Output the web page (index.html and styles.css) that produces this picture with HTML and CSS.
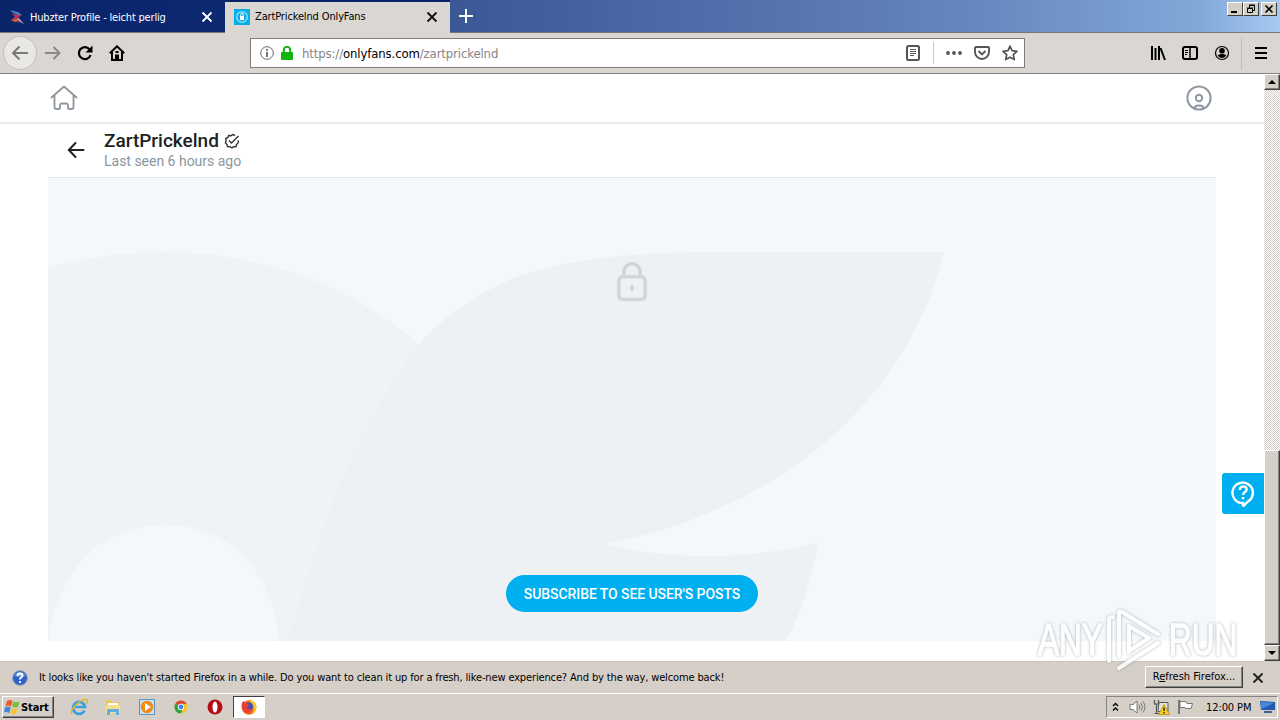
FILE: index.html
```html
<!DOCTYPE html>
<html lang="en">
<head>
<meta charset="utf-8">
<title>ZartPrickelnd OnlyFans</title>
<link rel="stylesheet" href="styles.css">
</head>
<body>
<header class="tabstrip">
  <div class="tab tab-idle">
    <svg class="favicon" width="18" height="18" viewBox="0 0 18 18"><path d="M2 2l8 2 4 3-3 1-6-3z" fill="#4b78b8"/><path d="M4 6l9 1.500-6 5-4 0 4-4z" fill="#c22c58"/><path d="M8 11l3-1 5 6-6-3z" fill="#a9a0b8"/><path d="M3 12l6-1 3 2-5 1z" fill="#d2603a"/></svg>
    <span class="tab-title t1">Hubzter Profile - leicht perlig</span>
    <svg class="x" width="12" height="12" viewBox="0 0 12 12"><path d="M1.500 1.500l9 9m0-9l-9 9" stroke="#fff" stroke-width="1.800"/></svg>
  </div>
  <div class="tab tab-active">
    <svg class="favicon" width="16" height="16" viewBox="0 0 16 16"><path fill="#08aee8" d="M0 0h16v16H0z"/><circle cx="8" cy="8" r="5.300" fill="none" stroke="#8be0fb" stroke-width="1.400"/><path d="M6 7h4v4H6z" fill="#fff"/><path d="M6.700 7V5.700a1.300 1.300 0 012.600 0V7" stroke="#fff" fill="none"/></svg>
    <span class="tab-title t2">ZartPrickelnd OnlyFans</span>
    <svg class="x" width="12" height="12" viewBox="0 0 12 12"><path d="M1.500 1.500l9 9m0-9l-9 9" stroke="#111" stroke-width="1.800"/></svg>
  </div>
  <svg class="plus" width="14" height="14" viewBox="0 0 14 14"><path d="M7 0v14M0 7h14" stroke="#fff" stroke-width="2"/></svg>
  <div class="winbtns">
    <div class="wb"><svg width="14" height="12" viewBox="0 0 14 12"><path d="M3 9h6" stroke="#000" stroke-width="2"/></svg></div>
    <div class="wb"><svg width="14" height="12" viewBox="0 0 14 12"><path d="M5.500 5V2.500h5v5H9M5 2h6M3.500 5.500h5v4h-5zM3 5h6" fill="none" stroke="#000"/></svg></div>
    <div class="wb wb-close"><svg width="14" height="12" viewBox="0 0 14 12"><path d="M3.500 2.500l7 7m0-7l-7 7" stroke="#000" stroke-width="1.600"/></svg></div>
  </div>
</header>

<nav class="toolbar">
  <div class="nav-btns">
    <div class="back"><svg width="18" height="18" viewBox="0 0 18 18"><path d="M17 9H2M8.500 2.500L2 9l6.500 6.500" fill="none" stroke="#7a7875" stroke-width="2"/></svg></div>
    <div class="nb"><svg width="16" height="16" viewBox="0 0 16 16"><path d="M0 8h14M8.500 2L14.500 8l-6 6" fill="none" stroke="#8b8885" stroke-width="2"/></svg></div>
    <div class="nb"><svg width="16" height="16" viewBox="0 0 16 16"><path d="M12.500 4.200A6 6 0 1 0 13.600 10" fill="none" stroke="#000" stroke-width="2.200"/><path d="M15.500.5v7h-7z"/></svg></div>
    <div class="nb"><svg width="16" height="16" viewBox="0 0 16 16"><path d="M.8 8.300L8 1.300l7.200 7M3 7v8h10V7" fill="none" stroke="#000" stroke-width="2"/><path d="M6 15v-5.500h4V15M6.500 6h3v2h-3z"/></svg></div>
  </div>
  <div class="urlbar">
    <svg width="14" height="14" viewBox="0 0 14 14"><circle cx="7" cy="7" r="6.300" fill="none" stroke="#666"/><path d="M7 6v5M7 3v1.700" stroke="#555" stroke-width="1.600"/></svg>
    <svg class="lock" width="12" height="14" viewBox="0 0 12 14"><path d="M2.800 7V4a3.200 3.200 0 016.400 0v3" fill="none" stroke="#12b012" stroke-width="2"/><rect y="6" width="12" height="8" rx="1" fill="#10b510"/></svg>
    <div class="url"><span>https://</span><b>onlyfans.com</b><span>/zartprickelnd</span></div>
    <div class="url-actions">
      <svg width="14" height="16" viewBox="0 0 14 16"><rect x="1" y="1" width="12" height="14" rx="1.500" fill="none" stroke="#555" stroke-width="2"/><path d="M4 4.500h6M4 6.500h6M4 8.500h6M4 10.500h4" stroke="#555"/></svg>
      <i class="vsep"></i>
      <svg width="16" height="16" viewBox="0 0 16 16" fill="#555"><circle cx="2" cy="8" r="1.900"/><circle cx="8" cy="8" r="1.900"/><circle cx="14" cy="8" r="1.900"/></svg>
      <svg width="16" height="16" viewBox="0 0 16 16" fill="none" stroke="#555" stroke-width="1.900"><path d="M2 2h12q1 0 1 1v4a7 7 0 01-14 0V3q0-1 1-1zM4.500 6L8 9.400 11.500 6"/></svg>
      <svg width="16" height="16" viewBox="0 0 16 16"><path d="M8 1l2 4.700 5 .6-3.700 3.300 1 5L8 12.200l-4.300 2.400 1-5L1 6.300l5-.6z" fill="none" stroke="#555" stroke-width="1.700" stroke-linejoin="round"/></svg>
    </div>
  </div>
  <div class="tools">
    <svg width="16" height="16" viewBox="0 0 16 16" stroke="#000" stroke-width="2"><path d="M2 1v14M5.500 3v12M9 1v14M10.500 3l4.500 12"/></svg>
    <svg width="16" height="16" viewBox="0 0 16 16"><rect x="1" y="2" width="14" height="12" rx="2" fill="none" stroke="#000" stroke-width="2"/><path d="M8 2v12" stroke="#000" stroke-width="1.500"/><path d="M3 5.500h3M3 7.500h3M3 9.500h2" stroke="#000"/></svg>
    <svg width="16" height="16" viewBox="0 0 16 16"><circle cx="8" cy="8" r="6.500" fill="none" stroke="#000" stroke-width="1.200"/><circle cx="8" cy="5.800" r="2.800"/><path d="M3.700 10q4.300-2 8.600 0-1.300 3-4.300 3t-4.300-3z"/></svg>
    <i class="vsep tall"></i>
    <svg class="menu" width="12" height="12" viewBox="0 0 12 12"><path d="M0 1h12M0 6h12M0 11h12" stroke="#000" stroke-width="2"/></svg>
  </div>
</nav>

<div class="viewport">
  <main class="page">
    <div class="site-head">
      <svg width="28" height="26" viewBox="0 0 28 26"><path d="M1.500 12.500L14 1.500l12.500 11M4.500 10.500V22q0 2 2 2H9q1 0 1-1v-2.500q0-2 2-2h4q2 0 2 2V23q0 1 1 1h2.500q2 0 2-2V10.500" fill="none" stroke="#8f979f" stroke-width="1.800" stroke-linecap="round" stroke-linejoin="round"/></svg>
      <svg width="26" height="26" viewBox="0 0 26 26" fill="none" stroke="#8f979f" stroke-width="2"><circle cx="13" cy="13" r="11.600"/><circle cx="13" cy="13" r="3.200"/><path d="M8.500 23.500q0-3 4.500-3t4.500 3"/></svg>
    </div>
    <div class="column">
      <div class="profile">
        <svg width="18" height="18" viewBox="0 0 18 18"><path d="M16.500 9H2M8.500 2L1.800 9l6.700 7" fill="none" stroke="#222" stroke-width="2" stroke-linecap="round" stroke-linejoin="round"/></svg>
        <div class="who">
          <div class="name"><span>ZartPrickelnd</span><svg width="16" height="16" viewBox="0 0 16 16" fill="none" stroke="#333" stroke-width="1.400"><path d="M14.500 7.500L14 10l-1.500 1.500-.5 2-2.500.2L8 15l-2-1.300-2.500-.2-.5-2L1.500 10 2 7.500 1.800 5.500l2-1 .8-2 2.400.2L9 1.500l2 1"/><path d="M5 7.500L7.500 10 14.500 3"/></svg></div>
          <div class="seen">Last seen 6 hours ago</div>
        </div>
      </div>
      <div class="locked">
        <svg class="backdrop" width="1168" height="463" viewBox="48 178 1168 463"><path fill="#eff3f6" fill-rule="evenodd" d="M48 268Q104 252 165 252C263 252 353 287 419 344L420 641H278Q277 596 246 558 213 525 165 525 116 525 84 558 53 593 49 641H48z"/><path fill="#edf1f4" d="M944 252H722C560 252 485 273 419 344C349 436 322 525 288 641H786Q808 600 818 543Q705 569 605 544C770 512 905 410 944 252z"/></svg>
        <svg width="32" height="40" viewBox="0 0 32 40" fill="none" stroke="#d1d5d8"><path d="M8 16V9a8 7.300 0 0116 0v7" stroke-width="3.600"/><rect x="2.800" y="14.800" width="26.400" height="22.700" rx="4" stroke-width="3.600"/><path d="M16 23v6" stroke-width="3.500"/></svg>
        <button class="subscribe"><span>SUBSCRIBE TO SEE USER'S POSTS</span></button>
      </div>
    </div>
    <div class="help"><svg width="24" height="28" viewBox="0 0 24 28" fill="none" stroke="#fff" stroke-width="2.400"><path d="M12 26.500v-3.500A10.200 10.200 0 1 1 17 21.500L12 26.500"/><path d="M8.800 10q0-3.500 3.400-3.500t3.400 3q0 1.500-1.700 2.500T12 15M12 17v2.300"/></svg></div>
  </main>
  <div class="scrollbar">
    <div class="sb-btn"><svg width="8" height="4" viewBox="0 0 8 4"><path d="M0 4l4-4 4 4z"/></svg></div>
    <div class="sb-track"></div>
    <div class="sb-thumb"></div>
    <div class="sb-btn"><svg width="8" height="4" viewBox="0 0 8 4"><path d="M0 0l4 4 4-4z"/></svg></div>
  </div>
</div>

<div class="notice">
  <svg width="16" height="16" viewBox="0 0 16 16"><circle cx="8" cy="8" r="7.300" fill="#2c62ca" stroke="#8596b6"/><path d="M3 6a5 4 0 0110 0q-5 2-10 0z" fill="#729ce5"/><path d="M5.500 6q0-2.500 2.500-2.500T10.500 6Q10.500 7 8 8.500v1M8 11v2" fill="none" stroke="#fff" stroke-width="1.800"/></svg>
  <span class="notice-text">It looks like you haven't started Firefox in a while. Do you want to clean it up for a fresh, like-new experience? And by the way, welcome back!</span>
  <button class="refresh"><span>R<u>e</u>fresh Firefox...</span></button>
  <svg class="nx" width="12" height="12" viewBox="0 0 12 12"><path d="M1.500 1.500l9 9m0-9l-9 9" stroke="#222" stroke-width="1.900"/></svg>
</div>

<footer class="taskbar">
  <div class="start"><svg width="16" height="16" viewBox="0 0 16 16"><path d="M3 2q3-2 5.500 0L7 7.500Q4.500 6 1.500 7z" fill="#ea5a2b"/><path d="M9.500 2.500Q12 4 15.500 2.500L14 8q-3 1-6-.5z" fill="#7cbc35"/><path d="M1.200 8q3-1 5.500.5l-1.500 5.500q-3-1.500-5.200-.5z" fill="#3e8bdc"/><path d="M7.700 9q2.500 1.500 6 .5l-1.500 5q-3 1.500-6-.3z" fill="#f7c331"/></svg><b>Start</b></div>
  <div class="quick">
    <svg width="18" height="18" viewBox="0 0 18 18"><path d="M14.500 12.500A6 6 0 1 1 15 9H5" fill="none" stroke="#38a1df" stroke-width="2.700"/><path d="M2 16Q-1 14 6 7t11-5q1 1-.5 4" fill="none" stroke="#e5b62b" stroke-width="1.400"/></svg>
    <svg width="18" height="18" viewBox="0 0 18 18"><path d="M2 2h5l1 2h8v10H2z" fill="#e9c75e"/><path d="M4 5h10v5H4z" fill="#fff"/><path d="M2 7h14v8H2z" fill="#f4df8d"/><path d="M3 17v-5q0-1 1-1h10q1 0 1 1v5h-3v-3H6v3z" fill="#62addb"/></svg>
    <svg width="18" height="18" viewBox="0 0 18 18"><rect x="1.500" y="1.500" width="15" height="15" fill="#cbe2f3" stroke="#5a94c6"/><circle cx="9" cy="9" r="6.200" fill="#f08a1c"/><path d="M7 5l6 4-6 4z" fill="#fff"/></svg>
    <svg width="18" height="18" viewBox="0 0 18 18"><circle cx="9" cy="9" r="6.500" fill="#f4c524"/><path d="M9 9L3.400 5.700A6.500 6.500 0 0114.600 5.700H9z" fill="#dd4335"/><path d="M9 9L3.400 5.700A6.500 6.500 0 009 15.500L11 10z" fill="#2da04e"/><circle cx="9" cy="9" r="3.200" fill="#fff"/><circle cx="9" cy="9" r="2.400" fill="#4381dc"/></svg>
    <svg width="18" height="18" viewBox="0 0 18 18"><circle cx="9" cy="9" r="7.500" fill="#b40d16"/><ellipse cx="9" cy="9" rx="2.500" ry="5.600" fill="#fff"/></svg>
    <div class="running"><svg width="18" height="18" viewBox="0 0 18 18"><circle cx="9" cy="9.500" r="7.300" fill="#f36b22"/><path d="M10 1q7 4 6.500 9-1 5-5 6 4-5 1-9-3-2-2.500-6z" fill="#fbc528"/><circle cx="9" cy="8.500" r="4" fill="#4a4fb4"/><path d="M1.700 9Q1 4 4 3q0 2 3 3l2 1-2 2q0 3 5 2-1 4-5 4t-5.300-6z" fill="#ee3e35"/></svg></div>
  </div>
  <div class="tray">
    <svg width="7" height="10" viewBox="0 0 7 10"><path d="M1 4l2.500-2.500L6 4M1 8.500L3.500 6 6 8.500" fill="none" stroke="#000" stroke-width="1.400"/></svg>
    <svg class="vol" width="17" height="16" viewBox="0 0 17 16"><path d="M1 5.500h3L8 2v12l-4-3.500H1z" fill="#fff" stroke="#777"/><path d="M10 5.500q1.500 2.500 0 5M12 4q3 4 0 8M14 2.500q4 5.500 0 11" fill="none" stroke="#777"/></svg>
    <svg class="net" width="17" height="16" viewBox="0 0 17 16"><path d="M6 3.500h9v9H5z" fill="#e2e2e2" stroke="#555"/><path d="M1.500 1v4h4V1M3.500 5v10M1.500 14.500h6" fill="none" stroke="#555" stroke-width="1.200"/><path d="M11 5.500l5.500 10h-11z" fill="#f5cf22" stroke="#b58c00" stroke-width=".7"/><path d="M11 8.500v3.500m0 1v1.500" stroke="#222" stroke-width="1.400"/></svg>
    <svg class="flag" width="17" height="16" viewBox="0 0 17 16"><path d="M2 1v14" stroke="#777" stroke-width="2"/><path d="M3 2.500h6l1 2h5.500L14 9.500H8.500L8 8.500H3z" fill="#fff" stroke="#777"/></svg>
    <span class="clock">12:00 PM</span>
    <svg class="desk" width="15" height="14" viewBox="0 0 15 14"><path d="M0 1l15 1v8L1 10z" fill="#215ab0"/><path d="M1 2l13 1-6 3-7 3z" fill="#4788d7"/><path d="M4 12h8" stroke="#426387" stroke-width="2"/></svg>
  </div>
</footer>

<div class="watermark">
  <span class="wm wm-any">ANY</span>
  <svg width="60" height="64" viewBox="0 0 60 64" fill="none" stroke="#fff" stroke-width="4" stroke-linejoin="round" stroke-linecap="round"><path d="M4 53V12q0-3 4-3M14 48V5q0-3 3-1l36 22M24 44V18l20 12-20 13M14 60l39-25"/></svg>
  <span class="wm wm-run">RUN</span>
</div>
</body>
</html>
```
FILE: styles.css
```css
* { box-sizing: border-box; }
body { margin: 0; width: 1280px; height: 720px; overflow: hidden; display: flex; flex-direction: column; position: relative; background: #fff; color: #000; font: 11px "DejaVu Sans Condensed", "DejaVu Sans", sans-serif; font-stretch: condensed; }
svg { display: block; flex: none; }
button { font: inherit; padding: 0; }
span { white-space: nowrap; }

.tabstrip { height: 33px; flex: none; display: flex; background: linear-gradient(90deg, #0a246a 0, #0c2870 220px, #3a5796 450px, #5470ad 750px, #6688bf 980px, #82a8d8 1200px, #a6caf0 1280px); border-bottom: 1px solid #75757c; }
.tab { display: flex; align-items: center; width: 225px; flex: none; }
.tab-idle { color: #fff; height: 32px; padding: 2px 12px 0 8px; }
.tab-active { background: #dad7d2; height: 31px; margin-top: 2px; padding: 0 12px 2px 9px; box-shadow: 0 1px #dad7d2, 0 -2px #0a246a; }
.favicon { margin-right: 4px; }
.tab-active .favicon { margin-right: 5px; }
.tab-title { flex: 1; }
.t1 { letter-spacing: -.19px; }
.t2 { letter-spacing: -.14px; }
.plus { margin: 9px 0 0 9px; }
.winbtns { margin: 2px 3px 0 auto; display: flex; }
.wb { width: 16px; height: 14px; background: #d4d0c8; border: 1px solid; border-color: #fff #404040 #404040 #fff; }
.wb-close { margin-left: 2px; }

.toolbar { height: 41px; flex: none; display: flex; align-items: center; background: #dad7d2; border-bottom: 1px solid #85827e; }
.nav-btns { display: flex; align-items: center; padding-left: 3px; width: 250px; }
.nb { width: 32px; display: flex; justify-content: center; }
.back { width: 34px; height: 34px; border-radius: 50%; border: 1px solid #c2bfba; background: #e9e7e3; display: flex; align-items: center; justify-content: center; }
.urlbar { width: 775px; height: 30px; background: #fff; border: 1px solid #817e79; display: flex; align-items: center; padding: 0 6px 0 9px; }
.lock { margin-left: 7px; }
.url { margin-left: 9px; font-size: 13px; color: #858585; flex: 1; display: flex; letter-spacing: -.12px; }
.url b { font-weight: 400; color: #000; }
.url-actions { display: flex; align-items: center; gap: 12px; }
.vsep { width: 1px; height: 22px; background: #c8c8c8; }
.url-actions .vsep { margin-left: 1px; }
.tools { display: flex; align-items: center; gap: 16px; margin-left: 125px; }
.tall { height: 33px; background: #c2bfba; margin: 0 -3px 0 -5px; }

.viewport { height: 587px; flex: none; display: flex; }
.page { width: 1264px; position: relative; background: #fff; }
.site-head { height: 50px; border-bottom: 2px solid #e9ebed; padding: 0 52px 0 50px; display: flex; align-items: center; justify-content: space-between; }
.column { width: 1168px; margin: 0 auto; font-family: Roboto, sans-serif; font-stretch: normal; }
.profile { height: 54px; border-bottom: 1px solid #dfe6ec; display: flex; align-items: center; padding: 0 0 2px 19px; gap: 19px; }
.name { display: flex; align-items: center; gap: 5px; font-size: 19px; font-weight: 500; line-height: 22px; color: #1d1f21; letter-spacing: 0; }
.seen { font-size: 14px; line-height: 18px; color: #8a96a3; letter-spacing: -.01px; }
.locked { height: 463px; position: relative; background: #f4f8fb; display: flex; flex-direction: column; align-items: center; justify-content: space-between; padding: 84px 0 29px; }
.backdrop { position: absolute; inset: 0; }
.locked > :not(.backdrop) { position: relative; }
.subscribe { width: 252px; height: 37px; border: 0; border-radius: 19px; background: #00aff0; color: #fff; font: 500 14px Roboto, sans-serif; letter-spacing: -.08px; }
.help { position: absolute; right: 0; top: 399px; width: 42px; height: 41px; background: #00aff0; border-radius: 3px 0 0 3px; display: flex; align-items: center; justify-content: center; }

.scrollbar { width: 16px; display: flex; flex-direction: column; background: repeating-conic-gradient(#fff 0 25%, #d4d0c8 0 50%) 0 0 / 2px 2px; }
.sb-btn, .sb-thumb { background: #d4d0c8; border: 1px solid; border-color: #fff #404040 #404040 #fff; box-shadow: inset -1px -1px #868482; }
.sb-btn { height: 16px; display: flex; align-items: center; justify-content: center; }
.sb-track { height: 360px; }
.sb-thumb { flex: 1; }

.notice { height: 32px; flex: none; background: #d6cfc8; display: flex; align-items: center; padding-left: 12px; border-top: 1px solid #c9c7c0; }
.notice-text { margin-left: 11px; width: 1106px; letter-spacing: -.137px; }
.refresh { width: 98px; height: 22px; flex: none; margin-top: -2px; background: #d6cfc8; border: 1px solid; border-color: #fff #404040 #404040 #fff; box-shadow: inset -1px -1px #868482; letter-spacing: 0; }
.nx { margin-left: 9px; }

.taskbar { height: 27px; flex: none; background: #d6cfc8; border-top: 1px solid #fff; display: flex; align-items: center; padding: 0 2px; }
.start { width: 52px; height: 22px; border: 1px solid; border-color: #fff #404040 #404040 #fff; box-shadow: inset -1px -1px #868482; display: flex; align-items: center; padding-left: 1px; gap: 1px; letter-spacing: -.1px; }
.quick { display: flex; align-items: center; margin-left: 16px; gap: 16px; }
.running { width: 32px; height: 22px; margin-left: -7px; background: #fff; border: 1px solid; border-color: #404040 #fff #fff #404040; display: flex; align-items: center; justify-content: center; }
.tray { margin-left: auto; width: 172px; height: 22px; border: 1px solid; border-color: #868482 #fff #fff #868482; display: flex; align-items: center; padding-left: 5px; }
.vol { margin-left: 10px; }
.net { margin-left: 7px; }
.flag { margin-left: 7px; }
.clock { margin-left: 12px; width: 46px; letter-spacing: -.1px; }
.desk { margin-left: 8px; }

.watermark { position: absolute; left: 1038px; top: 608px; width: 200px; height: 64px; display: flex; align-items: center; opacity: .85; filter: drop-shadow(0 0 1.5px rgba(90, 95, 100, .55)); }
.wm { font: 400 45px/64px "Liberation Sans", sans-serif; color: #fff; -webkit-text-stroke: 1.5px #fff; display: block; transform-origin: 0 50%; transform: scaleX(.7); }
.wm-any { width: 67px; }
.wm-run { width: 62px; margin-left: 4px; }
```
